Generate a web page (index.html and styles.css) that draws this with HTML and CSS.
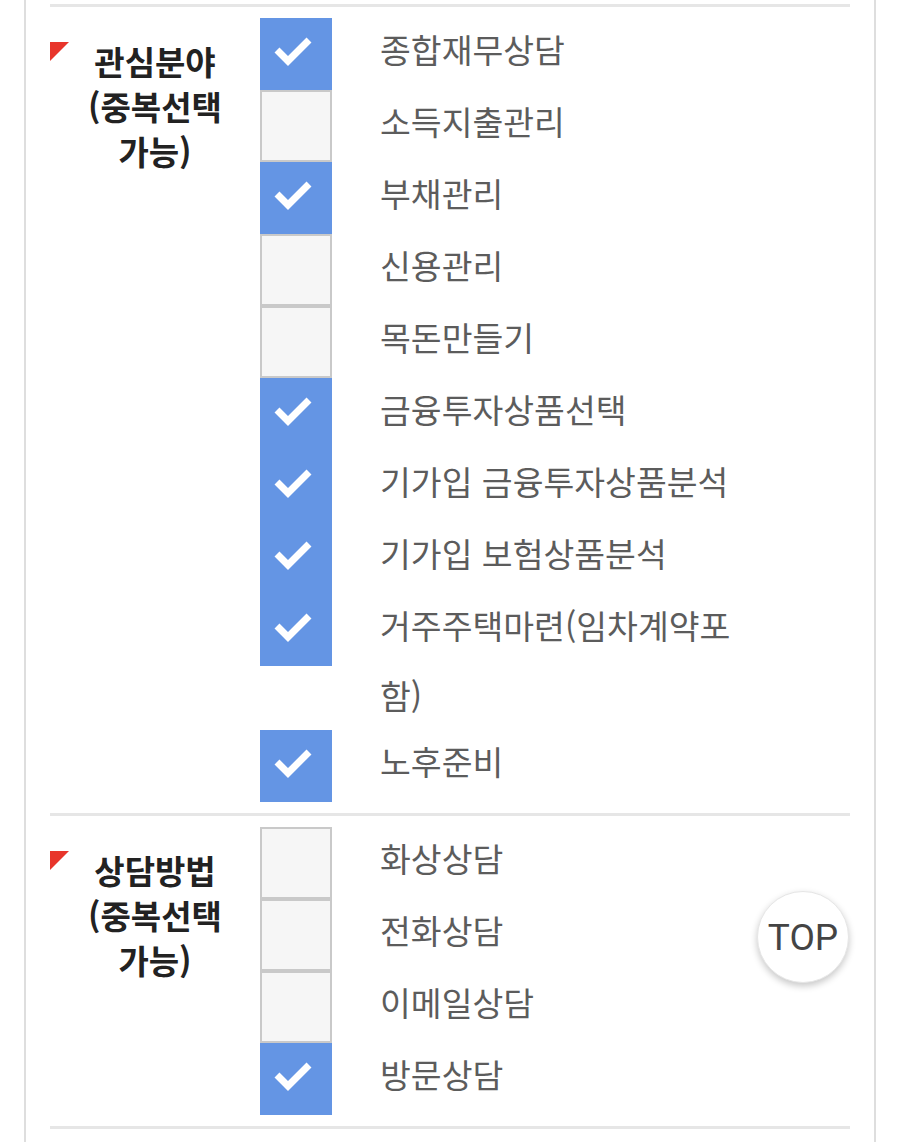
FILE: index.html
```html
<!DOCTYPE html>
<html lang="ko">
<head>
<meta charset="utf-8">
<title>관심분야</title>
<link rel="stylesheet" href="styles.css">
</head>
<body>
<div class="frame">
  <div class="section">
    <div class="head"><span class="mark"></span><span class="head-text">관심분야 (중복선택 가능)</span></div>
    <div class="options">
      <div class="row"><span class="box on"><svg viewBox="0 0 72 72"><polyline points="17,32 28,43 49,22"/></svg></span><span class="label">종합재무상담</span></div>
      <div class="row"><span class="box"></span><span class="label">소득지출관리</span></div>
      <div class="row"><span class="box on"><svg viewBox="0 0 72 72"><polyline points="17,32 28,43 49,22"/></svg></span><span class="label">부채관리</span></div>
      <div class="row"><span class="box"></span><span class="label">신용관리</span></div>
      <div class="row"><span class="box"></span><span class="label">목돈만들기</span></div>
      <div class="row"><span class="box on"><svg viewBox="0 0 72 72"><polyline points="17,32 28,43 49,22"/></svg></span><span class="label">금융투자상품선택</span></div>
      <div class="row"><span class="box on"><svg viewBox="0 0 72 72"><polyline points="17,32 28,43 49,22"/></svg></span><span class="label">기가입 금융투자상품분석</span></div>
      <div class="row"><span class="box on"><svg viewBox="0 0 72 72"><polyline points="17,32 28,43 49,22"/></svg></span><span class="label">기가입 보험상품분석</span></div>
      <div class="row"><span class="box on"><svg viewBox="0 0 72 72"><polyline points="17,32 28,43 49,22"/></svg></span><span class="label">거주주택마련(임차계약포함)</span></div>
      <div class="row"><span class="box on"><svg viewBox="0 0 72 72"><polyline points="17,32 28,43 49,22"/></svg></span><span class="label">노후준비</span></div>
    </div>
  </div>
  <div class="section">
    <div class="head"><span class="mark"></span><span class="head-text">상담방법 (중복선택 가능)</span></div>
    <div class="options">
      <div class="row"><span class="box"></span><span class="label">화상상담</span></div>
      <div class="row"><span class="box"></span><span class="label">전화상담</span></div>
      <div class="row"><span class="box"></span><span class="label">이메일상담</span></div>
      <div class="row"><span class="box on"><svg viewBox="0 0 72 72"><polyline points="17,32 28,43 49,22"/></svg></span><span class="label">방문상담</span></div>
    </div>
  </div>
  <div class="section end"></div>
</div>
<a class="top-btn" href="#">TOP</a>
</body>
</html>
```

FILE: styles.css
```css
html, body {
  margin: 0;
  padding: 0;
  background: #ffffff;
}

body {
  font-family: "Noto Sans CJK KR", "Noto Sans", sans-serif;
  width: 900px;
  height: 1142px;
  overflow: hidden;
  position: relative;
}

.frame {
  margin: 0 24px;
  border-left: 2px solid #dedede;
  border-right: 2px solid #dedede;
  padding: 4px 24px 0;
  min-height: 1142px;
  box-sizing: border-box;
}

.section {
  display: flex;
  border-top: 3px solid #e6e6e6;
  padding: 11px 0;
}

.section.end {
  padding: 0;
}

.head {
  width: 210px;
  display: flex;
  align-items: flex-start;
  flex-shrink: 0;
}

.mark {
  width: 0;
  height: 0;
  margin-top: 24px;
  border-top: 19px solid #e8352b;
  border-right: 19px solid transparent;
  flex-shrink: 0;
}

.head-text {
  flex: 1;
  padding: 21px 19px 0 0;
  text-align: center;
  font-size: 33px;
  font-weight: 700;
  line-height: 45px;
  color: #222222;
  word-break: keep-all;
}

.options {
  display: flex;
  flex-direction: column;
}

.row {
  display: flex;
  align-items: flex-start;
}

.box {
  width: 72px;
  height: 72px;
  box-sizing: border-box;
  border: 2px solid #c9c9c9;
  background: #f6f6f6;
  flex-shrink: 0;
  display: block;
}

.box.on {
  border: none;
  background: #6495e4;
}

.box svg {
  width: 72px;
  height: 72px;
  display: block;
}

.box svg polyline {
  fill: none;
  stroke: #ffffff;
  stroke-width: 7;
}

.label {
  margin-left: 48px;
  margin-top: -4px;
  width: 370px;
  font-size: 33.5px;
  line-height: 70px;
  color: #5c5c5c;
}

.top-btn {
  position: absolute;
  left: 757px;
  top: 891px;
  width: 92px;
  height: 92px;
  box-sizing: border-box;
  border-radius: 50%;
  background: #ffffff;
  border: 1px solid #e6e6e6;
  box-shadow: 0 3px 7px rgba(0, 0, 0, 0.22);
  display: flex;
  align-items: center;
  justify-content: center;
  font-family: Roboto, "Noto Sans", sans-serif;
  font-size: 37px;
  color: #444444;
  text-decoration: none;
}
```
